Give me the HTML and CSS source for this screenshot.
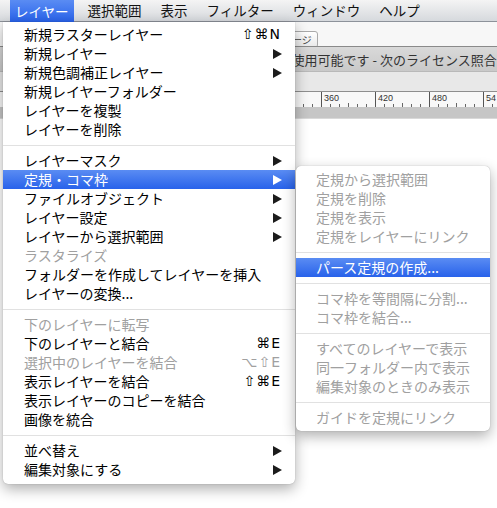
FILE: index.html
```html
<!DOCTYPE html>
<html lang="ja">
<head>
<meta charset="utf-8">
<title>レイヤー メニュー</title>
<link rel="stylesheet" href="styles.css">
</head>
<body>
<div class="screen">
  <div class="menubar">
    <span class="mb-item active">レイヤー</span>
    <span class="mb-item">選択範囲</span>
    <span class="mb-item">表示</span>
    <span class="mb-item">フィルター</span>
    <span class="mb-item">ウィンドウ</span>
    <span class="mb-item">ヘルプ</span>
  </div>

  <div class="window">
    <div class="toolbar"><span class="tb-button">ページ</span></div>
    <div class="titlebar">体験版として使用可能です - 次のライセンス照合</div>
    <div class="strip"><span class="strip-label">新規キャンバス</span></div>
    <div class="ruler">
      <svg class="ruler-svg" width="497" height="15" viewBox="0 0 497 15">
        <g stroke="#555" stroke-width="1">
          <line x1="213.5" y1="0" x2="213.5" y2="15"/>
          <line x1="267.5" y1="0" x2="267.5" y2="15"/>
          <line x1="321.5" y1="0" x2="321.5" y2="15"/>
          <line x1="375.5" y1="0" x2="375.5" y2="15"/>
          <line x1="429.5" y1="0" x2="429.5" y2="15"/>
          <line x1="483.5" y1="0" x2="483.5" y2="15"/>
        </g>
        <g stroke="#666" stroke-width="1">
          <line x1="294.5" y1="11" x2="294.5" y2="15"/>
          <line x1="303.5" y1="12" x2="303.5" y2="15"/>
          <line x1="312.5" y1="12" x2="312.5" y2="15"/>
          <line x1="330.5" y1="12" x2="330.5" y2="15"/>
          <line x1="339.5" y1="12" x2="339.5" y2="15"/>
          <line x1="348.5" y1="11" x2="348.5" y2="15"/>
          <line x1="357.5" y1="12" x2="357.5" y2="15"/>
          <line x1="366.5" y1="12" x2="366.5" y2="15"/>
          <line x1="384.5" y1="12" x2="384.5" y2="15"/>
          <line x1="393.5" y1="12" x2="393.5" y2="15"/>
          <line x1="402.5" y1="11" x2="402.5" y2="15"/>
          <line x1="411.5" y1="12" x2="411.5" y2="15"/>
          <line x1="420.5" y1="12" x2="420.5" y2="15"/>
          <line x1="438.5" y1="12" x2="438.5" y2="15"/>
          <line x1="447.5" y1="12" x2="447.5" y2="15"/>
          <line x1="456.5" y1="11" x2="456.5" y2="15"/>
          <line x1="465.5" y1="12" x2="465.5" y2="15"/>
          <line x1="474.5" y1="12" x2="474.5" y2="15"/>
          <line x1="492.5" y1="12" x2="492.5" y2="15"/>
        </g>
        <g class="ruler-num" fill="#333">
          <text x="216" y="9">240</text>
          <text x="270" y="9">300</text>
          <text x="324" y="9">360</text>
          <text x="378" y="9">420</text>
          <text x="432" y="9">480</text>
          <text x="486" y="9">54</text>
        </g>
      </svg>
    </div>
    <div class="band"></div>
  </div>

  <div class="menu main-menu">
    <div class="row"><span class="label">新規ラスターレイヤー</span><span class="key">⇧⌘N</span></div>
    <div class="row"><span class="label">新規レイヤー</span><span class="arrow"></span></div>
    <div class="row"><span class="label">新規色調補正レイヤー</span><span class="arrow"></span></div>
    <div class="row"><span class="label">新規レイヤーフォルダー</span></div>
    <div class="row"><span class="label">レイヤーを複製</span></div>
    <div class="row"><span class="label">レイヤーを削除</span></div>
    <div class="sep"></div>
    <div class="row"><span class="label">レイヤーマスク</span><span class="arrow"></span></div>
    <div class="row hl"><span class="label">定規・コマ枠</span><span class="arrow"></span></div>
    <div class="row"><span class="label">ファイルオブジェクト</span><span class="arrow"></span></div>
    <div class="row"><span class="label">レイヤー設定</span><span class="arrow"></span></div>
    <div class="row"><span class="label">レイヤーから選択範囲</span><span class="arrow"></span></div>
    <div class="row off"><span class="label">ラスタライズ</span></div>
    <div class="row"><span class="label">フォルダーを作成してレイヤーを挿入</span></div>
    <div class="row"><span class="label">レイヤーの変換...</span></div>
    <div class="sep"></div>
    <div class="row off"><span class="label">下のレイヤーに転写</span></div>
    <div class="row"><span class="label">下のレイヤーと結合</span><span class="key">⌘E</span></div>
    <div class="row off"><span class="label">選択中のレイヤーを結合</span><span class="key">⌥⇧E</span></div>
    <div class="row"><span class="label">表示レイヤーを結合</span><span class="key">⇧⌘E</span></div>
    <div class="row"><span class="label">表示レイヤーのコピーを結合</span></div>
    <div class="row"><span class="label">画像を統合</span></div>
    <div class="sep"></div>
    <div class="row"><span class="label">並べ替え</span><span class="arrow"></span></div>
    <div class="row"><span class="label">編集対象にする</span><span class="arrow"></span></div>
  </div>

  <div class="menu sub-menu">
    <div class="row off"><span class="label">定規から選択範囲</span></div>
    <div class="row off"><span class="label">定規を削除</span></div>
    <div class="row off"><span class="label">定規を表示</span></div>
    <div class="row off"><span class="label">定規をレイヤーにリンク</span></div>
    <div class="sep"></div>
    <div class="row hl"><span class="label">パース定規の作成...</span></div>
    <div class="sep"></div>
    <div class="row off"><span class="label">コマ枠を等間隔に分割...</span></div>
    <div class="row off"><span class="label">コマ枠を結合...</span></div>
    <div class="sep"></div>
    <div class="row off"><span class="label">すべてのレイヤーで表示</span></div>
    <div class="row off"><span class="label">同一フォルダー内で表示</span></div>
    <div class="row off"><span class="label">編集対象のときのみ表示</span></div>
    <div class="sep"></div>
    <div class="row off"><span class="label">ガイドを定規にリンク</span></div>
  </div>
</div>
</body>
</html>
```

FILE: styles.css
```css
html, body {
  margin: 0;
  padding: 0;
  background: #ffffff;
}

.screen {
  position: relative;
  width: 497px;
  height: 508px;
  overflow: hidden;
  background: #ffffff;
  font-family: "Noto Sans CJK JP", "Noto Sans", sans-serif;
  color: #000;
}

/* ---------- menu bar ---------- */
.menubar {
  height: 21px;
  display: flex;
  gap: 9px;
  padding-left: 10px;
  background: linear-gradient(#f4f4f4, #d6d9dd);
  border-bottom: 1px solid #8d929a;
  font-size: 13.5px;
  line-height: 21px;
}

.mb-item {
  padding: 0 5px;
  white-space: nowrap;
  color: #111;
}

.mb-item.active {
  color: #fff;
  background: linear-gradient(#5a8cf3, #2862ea);
  margin-bottom: -1px;
  line-height: 22px;
}

/* ---------- background window ---------- */
.window {
  display: flex;
  flex-direction: column;
}

.toolbar {
  height: 24px;
  background: #f7f7f7;
  padding-left: 276px;
  box-sizing: border-box;
  padding-top: 3px;
}

.tb-button {
  display: inline-block;
  height: 15px;
  padding: 0 5px;
  border: 1px solid #a9a9a9;
  border-radius: 3px;
  background: linear-gradient(#ffffff, #e9e9e9);
  font-size: 10px;
  line-height: 15px;
  color: #444;
}

.titlebar {
  height: 24px;
  border-top: 1px solid #8a8a8a;
  background: linear-gradient(#d9d9d9, #c9c9c9);
  padding-left: 214px;
  font-size: 13px;
  line-height: 25px;
  color: #333;
  white-space: nowrap;
  overflow: hidden;
}

.strip {
  height: 19px;
  border-top: 1px solid #b9b9b9;
  background: #e8e8e8;
  padding-left: 180px;
  font-size: 11px;
  line-height: 19px;
  color: #bbb;
}

.ruler {
  height: 15px;
  border-top: 1px solid #8e8e8e;
  background: #f8f8f8;
}

.ruler-svg {
  display: block;
}

.ruler-num {
  font-family: "Liberation Sans", sans-serif;
  font-size: 9px;
}

.band {
  height: 11px;
  background: #c6c6c6;
  border-bottom: 1px solid #d9d9d9;
}

/* ---------- menus ---------- */
.menu {
  position: absolute;
  background: #ffffff;
  box-shadow: 0 5px 14px rgba(0, 0, 0, 0.32), 0 0 1px rgba(0, 0, 0, 0.35);
  font-size: 14px;
}

.main-menu {
  top: 22px;
  left: 3px;
  width: 292px;
  padding: 3px 0 5px;
  border-radius: 0 0 5px 5px;
}

.sub-menu {
  top: 166px;
  left: 296px;
  width: 194px;
  padding: 4px 0;
  border-radius: 5px;
}

.row {
  display: flex;
  align-items: center;
  height: 19px;
  line-height: 19px;
  padding: 0 13px 0 21px;
  white-space: nowrap;
}

.sub-menu .row {
  padding-left: 20px;
}

.label {
  flex: 1;
}

.row.off {
  color: #a0a0a0;
}

.row.hl {
  color: #ffffff;
  background: linear-gradient(#5a8cf3, #2862ea);
}

.key {
  font-family: "DejaVu Sans", sans-serif;
  font-size: 14px;
  letter-spacing: 1px;
  padding-right: 1px;
}

.arrow {
  width: 0;
  height: 0;
  border-left: 9px solid #1c1c1c;
  border-top: 5px solid transparent;
  border-bottom: 5px solid transparent;
}

.row.hl .arrow {
  border-left-color: #ffffff;
}

.sep {
  height: 12px;
  display: flex;
  align-items: center;
}

.sep::before {
  content: "";
  flex: 1;
  height: 1px;
  background: #e1e1e1;
}
```
